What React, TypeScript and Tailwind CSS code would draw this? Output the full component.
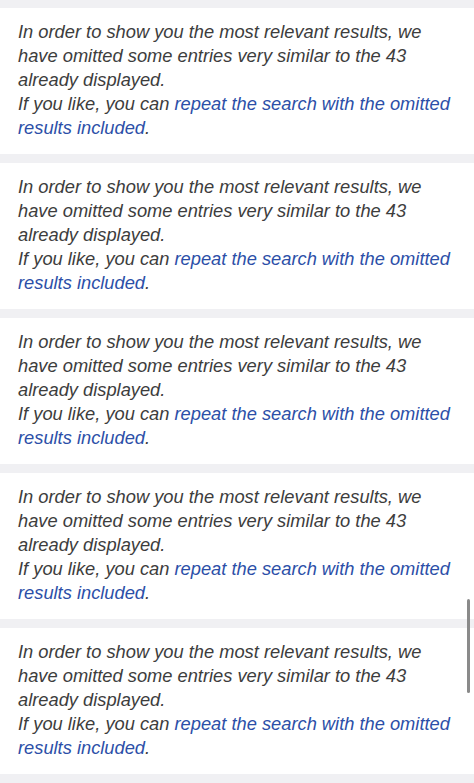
import React from 'react';

const notices = [1, 2, 3, 4, 5];

function OmittedNotice() {
  return (
    <div className="bg-white pl-[18px] pr-[14px] pt-[12px] pb-[14px]">
      <p className="italic text-[18.3px] leading-[24px] text-[#3d3d3d]">
        In order to show you the most relevant results, we have omitted some entries very similar to the 43 already displayed.
        <br />
        If you like, you can{' '}
        <a href="#" className="text-[#2c4fa8]">
          repeat the search with the omitted results included
        </a>
        .
      </p>
    </div>
  );
}

export default function App() {
  return (
    <div
      className="relative w-[474px] h-[783px] overflow-hidden bg-[#f0f0f3] pt-[8px] flex flex-col gap-[9px]"
      style={{ fontFamily: '"Liberation Sans", Arial, sans-serif' }}
    >
      {notices.map((n) => (
        <OmittedNotice key={n} />
      ))}
      {/* overlay scrollbar */}
      <div className="absolute right-[4px] top-[599px] w-[3px] h-[94px] rounded-full bg-[#8a8a8a]" />
    </div>
  );
}
